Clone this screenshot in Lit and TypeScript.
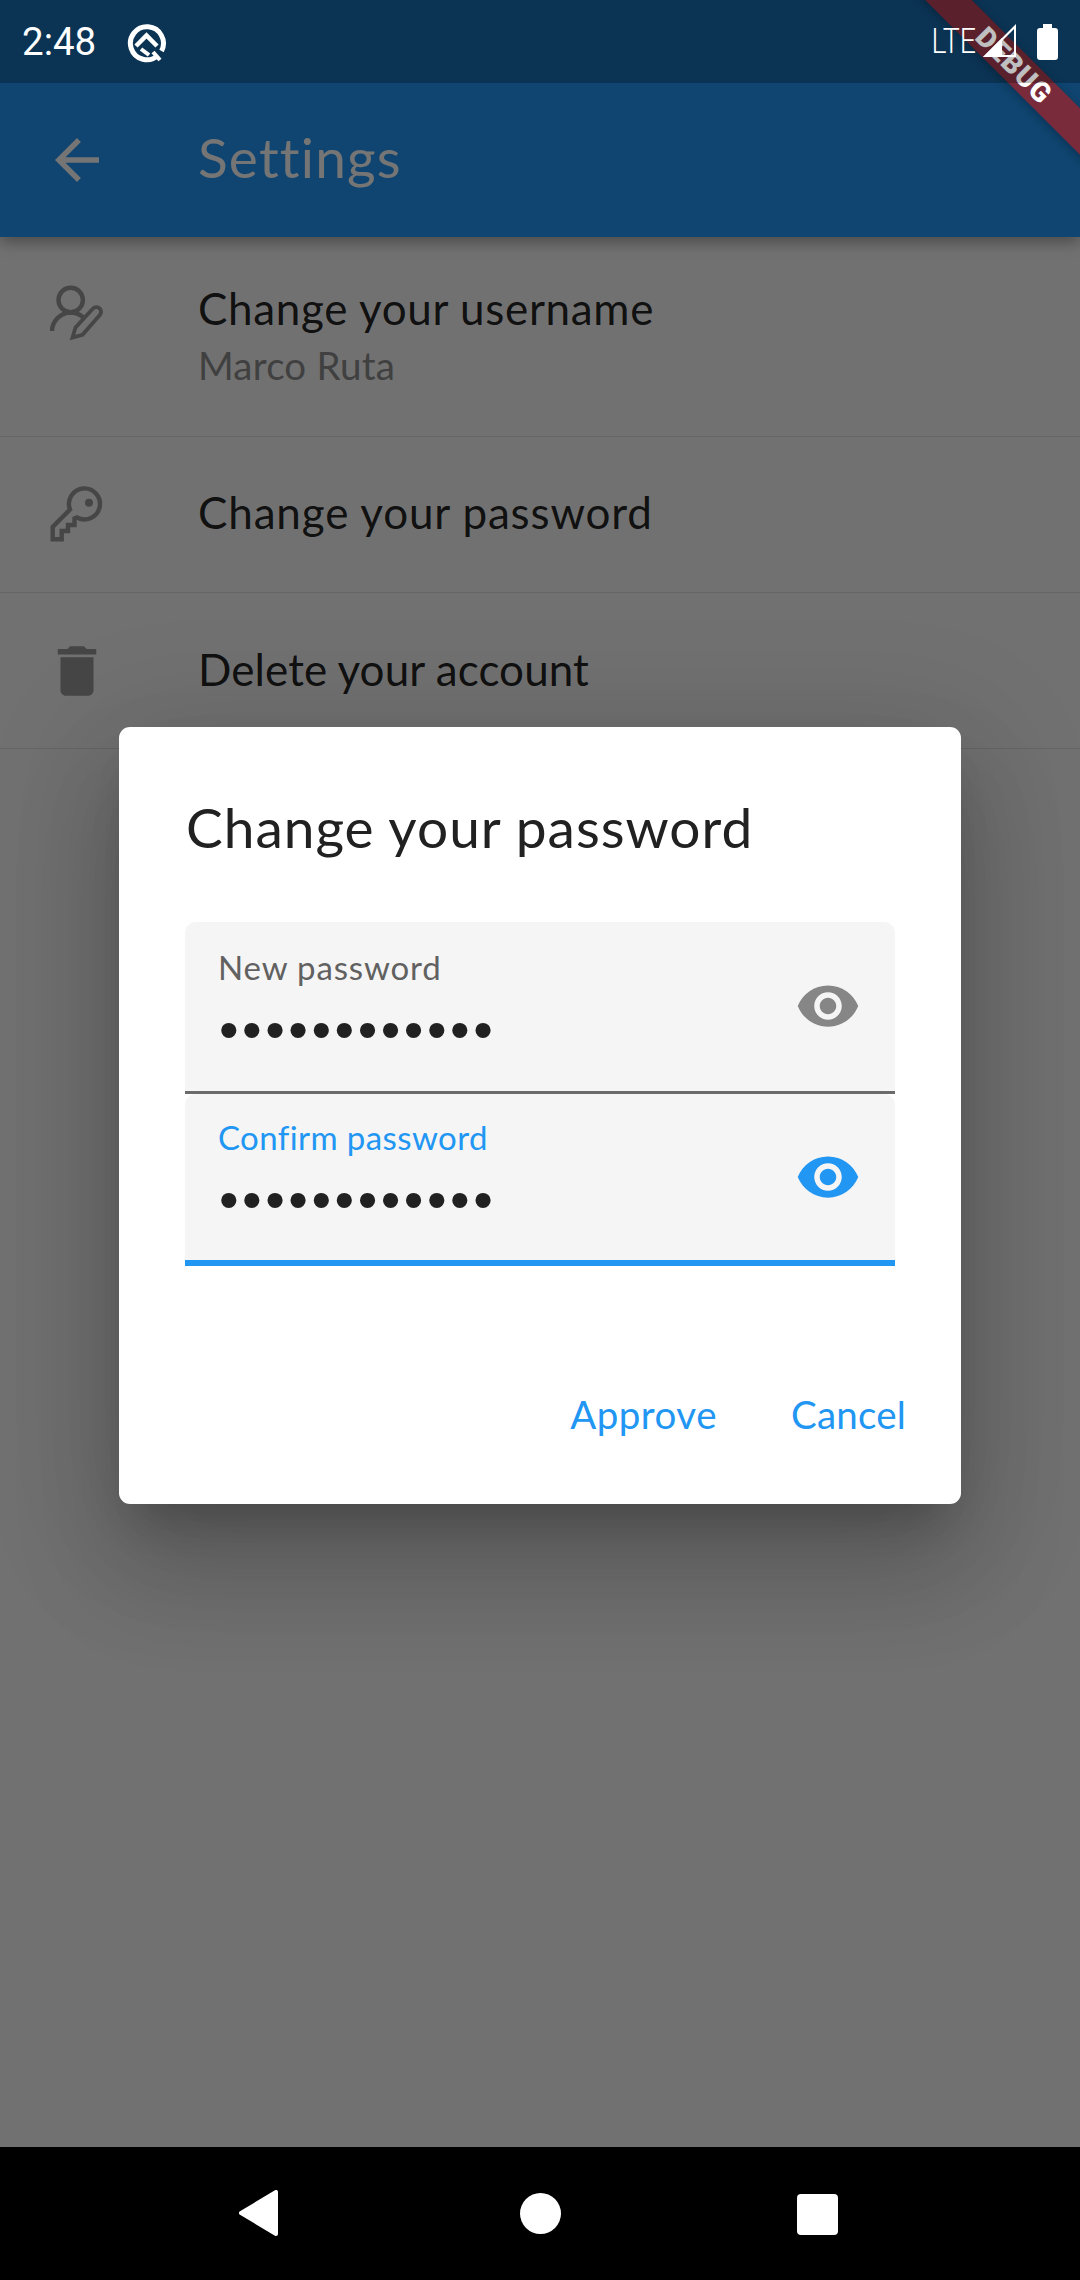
import {LitElement, css, html, svg} from 'lit';
import {customElement} from 'lit/decorators.js';

const EYE = 'M12 4.5C7 4.5 2.73 7.61 1 12c1.73 4.39 6 7.5 11 7.5s9.27-3.11 11-7.5c-1.73-4.39-6-7.5-11-7.5zM12 17c-2.76 0-5-2.24-5-5s2.24-5 5-5 5 2.24 5 5-2.24 5-5 5zm0-8c-1.66 0-3 1.34-3 3s1.34 3 3 3 3-1.34 3-3-1.34-3-3-3z';

const userEditIcon = svg`
  <g fill="none" stroke="currentColor" stroke-width="4.4">
    <circle cx="26.7" cy="20" r="12.2"/>
    <path d="M8 51A19 19 0 0 1 27 32.5Q33 32.5 39 37"/>
    <path stroke-width="3.8" stroke-linejoin="miter" d="M28.5 57.5L31.5 47.5L49 28.5a4.6 4.6 0 0 1 6.8 6.4L38.5 54.8Z"/>
  </g>`;

const keyIcon = svg`
  <path fill="none" stroke="currentColor" stroke-width="4.4" d="M26 27.5L8.7 45V57.3H17.7V49H24V43H30.5V36.5L33 35.5A15.5 15.5 0 1 0 26 27.5Z"/>
  <circle cx="45" cy="20.7" r="4" fill="currentColor"/>`;

const deleteIcon = svg`
  <path fill="currentColor" transform="scale(2.75)" d="M6 19c0 1.1.9 2 2 2h8c1.1 0 2-.9 2-2V7H6v12zM19 4h-3.5l-1-1h-5l-1 1H5v2h14V4z"/>`;

// tracking evens out the substitute font against the widths in the design
const rows = [
  {icon: userEditIcon, title: 'Change your username', subtitle: 'Marco Ruta', tracking: 0.66, shift: 0},
  {icon: keyIcon, title: 'Change your password', tracking: 0.85, shift: 6},
  {icon: deleteIcon, title: 'Delete your account', tracking: 0.08, shift: 3},
];

@customElement('app-root')
export class AppRoot extends LitElement {
  static styles = css`
    :host {
      display: block;
      width: 1080px;
      height: 2280px;
      font-family: Lato, "Noto Sans", sans-serif;
    }

    .screen {
      position: relative;
      width: 1080px;
      height: 2280px;
      overflow: hidden;
      display: flex;
      flex-direction: column;
      background: #000;
    }

    .app {
      position: relative;
      flex: 1;
      background: #f6f6f7;
      overflow: hidden;
    }

    .appbar {
      height: 154px;
      margin-top: 83px;
      display: flex;
      align-items: center;
      padding-left: 44px;
      color: #fff;
      box-sizing: border-box;
      position: relative;
    }

    .appbar-bg {
      position: absolute;
      inset: -83px 0 0 0;
      background: #2196f3;
      box-shadow: 0 5px 14px rgba(0, 0, 0, 0.35);
    }

    .appbar svg,
    .appbar span {
      position: relative;
    }

    .appbar svg {
      width: 66px;
      height: 66px;
      flex: none;
    }

    .appbar span {
      margin: 0 0 6px 88px;
      font-size: 55px;
      line-height: 66px;
      letter-spacing: 1.2px;
    }

    .row {
      display: flex;
      align-items: center;
      height: 156px;
      padding-left: 44px;
      box-sizing: border-box;
      border-bottom: 1px solid #dcdcdc;
      color: rgba(0, 0, 0, 0.87);
    }

    .row.tall {
      height: 200px;
      align-items: flex-start;
      padding-top: 43px;
    }

    .row svg {
      width: 66px;
      height: 66px;
      flex: none;
      color: #989898;
    }

    .row-text {
      margin-left: 88px;
    }

    .row-title {
      font-size: 44px;
      line-height: 56px;
    }

    .row-subtitle {
      font-size: 38.5px;
      line-height: 59px;
      letter-spacing: 0.2px;
      color: #8c8c8c;
    }

    .scrim {
      position: absolute;
      inset: 0;
      background: rgba(0, 0, 0, 0.54);
    }

    .dialog {
      position: absolute;
      left: 119px;
      top: 727px;
      width: 842px;
      height: 777px;
      background: #fff;
      border-radius: 11px;
      box-shadow: 0 66px 104px 8px rgba(0, 0, 0, 0.14), 0 25px 126px 22px rgba(0, 0, 0, 0.12), 0 30px 41px -19px rgba(0, 0, 0, 0.2);
    }

    .dialog-title {
      padding: 67px 0 0 67px;
      font-size: 55px;
      line-height: 66px;
      letter-spacing: 1px;
      color: #212121;
    }

    .fields {
      margin: 62px 66px 0;
    }

    .field {
      height: 172px;
      box-sizing: border-box;
      padding: 28px 34px 0 33px;
      display: flex;
      align-items: flex-start;
      justify-content: space-between;
      background: #f5f5f5;
      border-radius: 11px 11px 0 0;
      border-bottom: 3px solid #6b6b6b;
      color: #616161;
    }

    .field.focused {
      padding-top: 26px;
      border-bottom: 6px solid #2196f3;
      color: #2196f3;
    }

    .field-label {
      font-size: 33px;
      line-height: 34px;
      letter-spacing: 0.85px;
    }

    .field.focused .field-label {
      letter-spacing: 0.4px;
    }

    .field-value {
      margin: 20px 0 0 1px;
      font-family: "Liberation Sans", sans-serif;
      font-size: 56px;
      line-height: 52px;
      letter-spacing: 3.5px;
      color: #212121;
    }

    .field svg {
      width: 66px;
      height: 66px;
      margin-top: 23px;
      flex: none;
      color: rgba(0, 0, 0, 0.45);
    }

    .field.focused svg {
      margin-top: 24px;
      color: #2196f3;
    }

    .actions {
      margin-top: 122px;
      padding-right: 55px;
      display: flex;
      justify-content: flex-end;
      gap: 74px;
      font-size: 38.5px;
      line-height: 52px;
      letter-spacing: 0.5px;
      color: #2196f3;
    }

    .actions .cancel {
      letter-spacing: 0.2px;
    }

    .banner {
      position: absolute;
      left: 864px;
      top: 49px;
      width: 300px;
      height: 33px;
      transform: rotate(45deg);
      display: flex;
      align-items: center;
      justify-content: center;
      background: rgba(183, 28, 28, 0.63);
      box-shadow: 0 2px 10px rgba(0, 0, 0, 0.25);
      color: #fff;
      font-family: Roboto, sans-serif;
      font-size: 28px;
      font-weight: 900;
      letter-spacing: 1px;
    }

    .status {
      position: absolute;
      left: 0;
      top: 0;
      right: 0;
      height: 83px;
      box-sizing: border-box;
      padding: 0 22px 0 22px;
      display: flex;
      align-items: center;
      background: rgba(0, 0, 0, 0.25);
      color: #fff;
      font-family: Roboto, sans-serif;
    }

    .time {
      font-size: 38.5px;
      width: 103px;
    }

    .q-icon {
      width: 44px;
      height: 44px;
    }

    .lte {
      margin-left: auto;
      font-size: 28.5px;
      font-weight: 300;
      transform: scaleY(1.22);
    }

    .signal {
      width: 33px;
      height: 33px;
      margin: -3px 0 0 7px;
    }

    .battery {
      width: 21px;
      height: 36px;
      margin: 0 0 0 21px;
    }

    .nav {
      height: 133px;
      flex: none;
      box-sizing: border-box;
      padding: 0 242px 0 239px;
      display: flex;
      align-items: center;
      justify-content: space-between;
      background: #000;
    }

    .nav svg {
      margin-top: -1px;
    }

    .nav-home {
      width: 41px;
      height: 41px;
      margin: -1px 0 0 5px;
      border-radius: 50%;
      background: #fff;
    }

    .nav-recent {
      width: 41px;
      height: 41px;
      margin-top: 1px;
      border-radius: 4px;
      background: #fff;
    }
  `;

  renderRow(row: (typeof rows)[number]) {
    return html`
      <div class="row ${row.subtitle ? 'tall' : ''}">
        <svg viewBox="0 0 66 66">${row.icon}</svg>
        <div class="row-text" style="padding-bottom: ${row.shift}px">
          <div class="row-title" style="letter-spacing: ${row.tracking}px">${row.title}</div>
          ${row.subtitle ? html`<div class="row-subtitle">${row.subtitle}</div>` : ''}
        </div>
      </div>
    `;
  }

  renderField(label: string, focused: boolean) {
    return html`
      <div class="field ${focused ? 'focused' : ''}">
        <div>
          <div class="field-label">${label}</div>
          <div class="field-value">••••••••••••</div>
        </div>
        <svg viewBox="0 0 24 24"><path fill="currentColor" d=${EYE}></path></svg>
      </div>
    `;
  }

  render() {
    return html`
      <div class="screen">
        <div class="app">
          <div class="appbar">
            <div class="appbar-bg"></div>
            <svg viewBox="0 0 24 24"><path fill="currentColor" d="M20 11H7.83l5.59-5.59L12 4l-8 8 8 8 1.41-1.41L7.83 13H20v-2z"></path></svg>
            <span>Settings</span>
          </div>
          ${rows.map((row) => this.renderRow(row))}
          <div class="scrim"></div>
          <div class="dialog">
            <div class="dialog-title">Change your password</div>
            <div class="fields">
              ${this.renderField('New password', false)}
              ${this.renderField('Confirm password', true)}
            </div>
            <div class="actions">
              <span>Approve</span>
              <span class="cancel">Cancel</span>
            </div>
          </div>
        </div>
        <div class="banner">DEBUG</div>
        <div class="status">
          <span class="time">2:48</span>
          <svg class="q-icon" viewBox="0 0 44 44" fill="none" stroke="#fff">
            <path stroke-width="5" d="M33 35.5A16.5 16.5 0 1 1 36.5 31"/>
            <path stroke-width="4.5" d="M11 26L21.5 15.5L32 26"/>
            <path stroke-width="4" d="M16 29L24 35"/>
            <path stroke-width="4" d="M28 32L35 40"/>
          </svg>
          <span class="lte">LTE</span>
          <svg class="signal" viewBox="0 0 33 33">
            <path fill="#fff" d="M33 0V33H0ZM31 5L19 17V31H31Z"/>
            <path fill="#fff" d="M19 31V14L0 33Z"/>
          </svg>
          <svg class="battery" viewBox="0 0 21 36">
            <path fill="#fff" d="M6 0H15V4H18Q21 4 21 7V33Q21 36 18 36H3Q0 36 0 33V7Q0 4 3 4H6Z"/>
          </svg>
        </div>
        <div class="nav">
          <svg width="39" height="46" viewBox="0 0 39 46">
            <path fill="#fff" stroke="#fff" stroke-width="4" stroke-linejoin="round" d="M37 2V44L2 23Z"/>
          </svg>
          <div class="nav-home"></div>
          <div class="nav-recent"></div>
        </div>
      </div>
    `;
  }
}
